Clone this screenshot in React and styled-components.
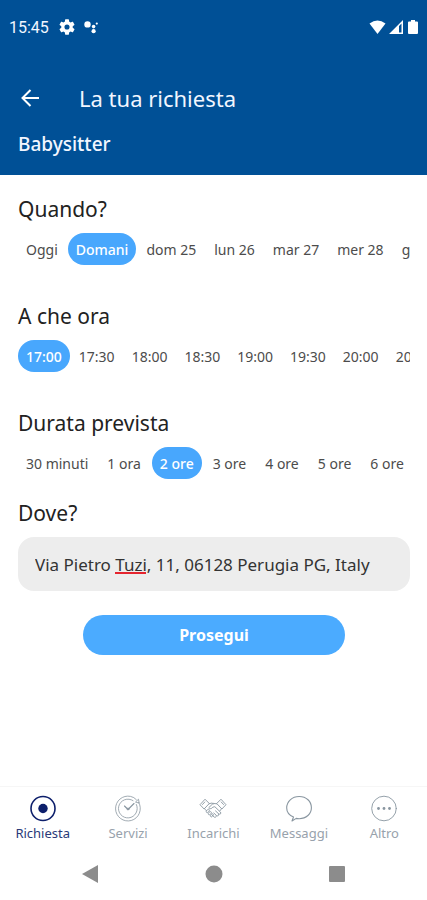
import React, { useLayoutEffect, useState } from "react";
import styled, { createGlobalStyle } from "styled-components";

const font = '"Noto Sans", "Open Sans", sans-serif';

const GlobalStyle = createGlobalStyle`
  * {
    box-sizing: border-box;
  }
  body {
    margin: 0;
    background: #fff;
    font-family: ${font};
  }
  button,
  input {
    font-family: inherit;
  }
`;

const Page = styled.div`
  display: flex;
  flex-direction: column;
  min-height: 100vh;
  background: #fff;
`;

const Header = styled.header`
  background: #005096;
  color: #f2f6ff;
  padding-bottom: 17px;
`;

const StatusBar = styled.div`
  display: flex;
  align-items: center;
  height: 54px;
  padding: 0 7px 0 9px;
  font-family: Roboto, sans-serif;
  font-size: 16px;
`;

const StatusIcons = styled.div`
  display: flex;
  align-items: center;
  gap: 8px;
  margin-left: 10px;
`;

const SignalIcons = styled(StatusIcons)`
  gap: 2px;
  margin-left: auto;
`;

const TitleRow = styled.div`
  display: flex;
  align-items: center;
  gap: 36px;
  height: 76px;
  padding: 12px 18px 0;
`;

const BackButton = styled.button`
  display: flex;
  padding: 0;
  border: 0;
  background: none;
  color: inherit;
  cursor: pointer;
`;

const Title = styled.h1`
  margin: 0;
  font-size: 22px;
  line-height: 30px;
  font-weight: 400;
`;

const Subtitle = styled.p`
  margin: 0;
  padding: 0 18px;
  font-size: 19px;
  line-height: 28px;
  font-weight: 500;
`;

const Main = styled.main`
  flex: 1;
  padding: 18px 17px 0 18px;
`;

const Section = styled.section`
  margin-bottom: ${(p) => (p.$tight ? 18 : 35)}px;
`;

const Heading = styled.h2`
  margin: 0 0 8px;
  color: #222;
  font-size: 21px;
  line-height: 32px;
  font-weight: 400;
`;

const Options = styled.div`
  display: flex;
  gap: ${(p) => p.$gap}px;
  overflow: hidden;
`;

const Option = styled.button`
  flex: none;
  height: 32px;
  padding: 0 8px;
  border: 0;
  border-radius: 16px;
  background: ${(p) => (p.$selected ? "#48a7fd" : "transparent")};
  color: ${(p) => (p.$selected ? "#fff" : "#4c4c4c")};
  font-size: 14px;
  font-weight: ${(p) => (p.$selected ? 500 : 400)};
  white-space: nowrap;
  cursor: pointer;
`;

const AddressLabel = styled.label`
  display: block;
  margin-bottom: 8px;
  color: #222;
  font-size: 21px;
  line-height: 32px;
`;

const AddressField = styled.div`
  position: relative;
`;

const AddressInput = styled.input`
  display: block;
  width: 100%;
  height: 54px;
  padding: 0 17px;
  border: 0;
  border-radius: 16px;
  background: #ededed;
  color: #333;
  font-size: 17px;
`;

const SpellingMark = styled.span`
  position: absolute;
  top: 35px;
  height: 2px;
  background: #e5252f;
  pointer-events: none;
`;

const SubmitButton = styled.button`
  display: block;
  width: 67%;
  height: 40px;
  margin: 24px auto;
  border: 0;
  border-radius: 20px;
  background: #4babff;
  color: #fff;
  font-size: 16px;
  font-weight: 700;
  cursor: pointer;
`;

const TabBar = styled.nav`
  display: grid;
  grid-template-columns: repeat(5, 1fr);
  padding-top: 8px;
  border-top: 1px solid #f6f6f6;
`;

const Tab = styled.a`
  display: flex;
  flex-direction: column;
  align-items: center;
  gap: 1px;
  color: ${(p) => (p.$active ? "#2a3a78" : "#98a2ac")};
  font-size: 13px;
  line-height: 18px;
  text-decoration: none;

  svg {
    color: ${(p) => (p.$active ? "#0d1f6b" : "#8996a0")};
  }
`;

const SystemBar = styled.div`
  display: flex;
  align-items: center;
  justify-content: space-between;
  height: 58px;
  padding: 6px 81px 0;
`;

const SystemButton = styled.button`
  display: flex;
  padding: 0;
  border: 0;
  background: none;
  cursor: pointer;
`;

const GearIcon = () => (
  <svg width="16" height="16" viewBox="2 2 20 20" fill="#fff" aria-hidden="true">
    <path d="M19.14 12.94a7 7 0 0 0 0-1.88l2.03-1.58a.5.5 0 0 0 .12-.61l-1.92-3.32a.5.5 0 0 0-.59-.22l-2.39.96a7 7 0 0 0-1.62-.94l-.36-2.54a.5.5 0 0 0-.48-.41h-3.84a.5.5 0 0 0-.47.41l-.36 2.54a7 7 0 0 0-1.62.94l-2.39-.96a.5.5 0 0 0-.59.22L2.74 8.87a.5.5 0 0 0 .12.61l2.03 1.58a7 7 0 0 0 0 1.88l-2.03 1.58a.5.5 0 0 0-.12.61l1.92 3.32c.12.22.37.29.59.22l2.39-.96c.5.38 1.03.7 1.62.94l.36 2.54c.05.24.24.41.48.41h3.84c.24 0 .44-.17.47-.41l.36-2.54a7 7 0 0 0 1.62-.94l2.39.96c.22.08.47 0 .59-.22l1.92-3.32a.5.5 0 0 0-.12-.61zM12 15.2a3.2 3.2 0 1 1 0-6.4 3.2 3.2 0 0 1 0 6.4z" />
  </svg>
);

const AssistantIcon = () => (
  <svg width="16" height="16" viewBox="0 0 16 16" fill="#fff" aria-hidden="true">
    <circle cx="4.5" cy="5.4" r="3.2" />
    <circle cx="10.6" cy="7.6" r="1.8" />
    <circle cx="10.6" cy="12.2" r="2.1" />
    <circle cx="13.8" cy="4.6" r="1.1" />
  </svg>
);

const WifiIcon = () => (
  <svg width="17" height="16" viewBox="0 0 17 16" fill="#fff" aria-hidden="true">
    <path d="M.5 4.6Q8.5-1.6 16.5 4.6L8.5 15z" />
  </svg>
);

const CellIcon = () => (
  <svg width="16" height="16" viewBox="0 0 16 16" fill="#fff" aria-hidden="true">
    <path fillRule="evenodd" d="M1 15L15 1v14zM11 7v6.5h2.500V4.500z" />
  </svg>
);

const BatteryIcon = () => (
  <svg width="14" height="16" viewBox="0 0 14 16" fill="#fff" aria-hidden="true">
    <path d="M5 1h4v1.500h2q1 0 1 1V14q0 1-1 1H3q-1 0-1-1V3.500q0-1 1-1h2z" />
  </svg>
);

const BackArrow = () => (
  <svg width="25" height="24" viewBox="0 0 25 24" fill="none" stroke="#fff" strokeWidth="2" aria-hidden="true">
    <path d="M21 12H5M12.5 4L4.500 12l8 8" />
  </svg>
);

const TabSvg = ({ children }) => (
  <svg width="28" height="28" viewBox="0 0 28 28" fill="none" stroke="currentColor" strokeLinecap="round" strokeLinejoin="round" aria-hidden="true">
    {children}
  </svg>
);

const RequestIcon = () => (
  <TabSvg>
    <circle cx="14" cy="13.5" r="12" strokeWidth="1.6" />
    <circle cx="14" cy="13.5" r="4.7" fill="currentColor" stroke="none" />
  </TabSvg>
);

const ServicesIcon = () => (
  <TabSvg>
    <g strokeWidth="0.8">
      <path d="M24.800 7.500A12.400 12.400 0 1 1 16.500 1.400Q20 2 22.400 4.700" />
      <path d="M22.400 9.500A9.400 9.400 0 1 1 19 5.600M21.800 6.800l2.700-2.600.6 3.500z" />
      <path d="M10.500 11l3.500 3.500L20 8.500" strokeWidth="1.1" />
      <circle cx="14" cy="14" r="1" />
    </g>
  </TabSvg>
);

const JobsIcon = () => (
  <TabSvg>
    <g strokeWidth="0.9">
      <path d="M6.300 4.500l4 4-5.200 5.500L1.300 10zM21.700 4.500l-4 4 5.200 5.500 3.800-4z" />
      <path d="M5.800 7L3.500 9.500M22.200 7l2.300 2.500" />
      <path d="M10 8.800l3-.8 1.500.9M17.700 8.800l-3.500-.4-4.400 4.200c1 1.600 2.800 1.300 4-.4l2-.5 5.600 5.300c1.200 1.400-.3 2.800-1.600 1.900l-3.300-3" />
      <path d="M19.500 19c.8 1.500-.8 2.600-2 1.500l-2.700-2.500M17.200 20.900c.2 1.400-1.100 2-2.200 1l-2-1.900M5.500 13.800l2 2M22.500 13.800L20.800 16" />
      <path d="M8.500 14.600c1.100-1.200 2.600.2 1.600 1.500l-1 1.200c-1.100 1.100-2.600-.2-1.700-1.400zM10.500 16.900c1.100-1.100 2.500.2 1.600 1.400l-1 1.200c-1.100 1-2.500-.2-1.600-1.400zM12.600 19c1.100-1 2.300.2 1.500 1.400l-1 1.200c-1 .9-2.200-.2-1.500-1.400z" />
    </g>
  </TabSvg>
);

const MessagesIcon = () => (
  <TabSvg>
    <path d="M8.500 22C4 20 1.700 16.800 1.700 12.900 1.700 6.500 7 1.500 14.200 1.500s12.200 5 12.200 11.200-5.200 11-12.200 11c-1 0-2-.1-3-.3L7 26z" strokeWidth="1.1" />
  </TabSvg>
);

const MoreIcon = () => (
  <TabSvg>
    <circle cx="14" cy="13.5" r="12.300" strokeWidth="0.9" />
    <g fill="currentColor" stroke="none">
      <circle cx="8.500" cy="13.500" r="1.400" />
      <circle cx="14" cy="13.500" r="1.400" />
      <circle cx="19.500" cy="13.500" r="1.400" />
    </g>
  </TabSvg>
);

const days = ["Oggi", "Domani", "dom 25", "lun 26", "mar 27", "mer 28", "gio 29"];
const times = ["17:00", "17:30", "18:00", "18:30", "19:00", "19:30", "20:00", "20:30"];
const durations = ["30 minuti", "1 ora", "2 ore", "3 ore", "4 ore", "5 ore", "6 ore"];

const tabs = [
  { label: "Richiesta", Icon: RequestIcon },
  { label: "Servizi", Icon: ServicesIcon },
  { label: "Incarichi", Icon: JobsIcon },
  { label: "Messaggi", Icon: MessagesIcon },
  { label: "Altro", Icon: MoreIcon },
];

const Picker = ({ title, items, initial, gap, tight }) => {
  const [selected, setSelected] = useState(initial);
  return (
    <Section $tight={tight}>
      <Heading>{title}</Heading>
      <Options $gap={gap}>
        {items.map((item) => (
          <Option
            key={item}
            type="button"
            $selected={item === selected}
            aria-pressed={item === selected}
            onClick={() => setSelected(item)}
          >
            {item}
          </Option>
        ))}
      </Options>
    </Section>
  );
};

const useWordMark = (text, word) => {
  const [mark, setMark] = useState(null);
  useLayoutEffect(() => {
    const start = text.indexOf(word);
    if (start < 0) {
      setMark(null);
      return;
    }
    const ctx = document.createElement("canvas").getContext("2d");
    ctx.font = `17px ${font}`;
    setMark({
      left: 17 + Math.round(ctx.measureText(text.slice(0, start)).width),
      width: Math.round(ctx.measureText(word).width),
    });
  }, [text, word]);
  return mark;
};

const Address = () => {
  const [address, setAddress] = useState("Via Pietro Tuzi, 11, 06128 Perugia PG, Italy");
  const mark = useWordMark(address, "Tuzi");
  return (
    <div>
      <AddressLabel htmlFor="address">Dove?</AddressLabel>
      <AddressField>
        <AddressInput
          id="address"
          type="text"
          spellCheck={false}
          value={address}
          onChange={(e) => setAddress(e.target.value)}
        />
        {mark && <SpellingMark style={mark} />}
      </AddressField>
    </div>
  );
};

const App = () => (
  <Page>
    <GlobalStyle />
    <Header>
      <StatusBar>
        <span>15:45</span>
        <StatusIcons>
          <GearIcon />
          <AssistantIcon />
        </StatusIcons>
        <SignalIcons>
          <WifiIcon />
          <CellIcon />
          <BatteryIcon />
        </SignalIcons>
      </StatusBar>
      <TitleRow>
        <BackButton type="button" aria-label="Indietro">
          <BackArrow />
        </BackButton>
        <Title>La tua richiesta</Title>
      </TitleRow>
      <Subtitle>Babysitter</Subtitle>
    </Header>
    <Main>
      <Picker title="Quando?" items={days} initial="Domani" gap={2} />
      <Picker title="A che ora" items={times} initial="17:00" gap={1} />
      <Picker title="Durata prevista" items={durations} initial="2 ore" gap={3} tight />
      <Address />
      <SubmitButton type="button">Prosegui</SubmitButton>
    </Main>
    <TabBar>
      {tabs.map(({ label, Icon }, i) => (
        <Tab key={label} href="#" $active={i === 0}>
          <Icon />
          {label}
        </Tab>
      ))}
    </TabBar>
    <SystemBar>
      <SystemButton type="button" aria-label="Indietro">
        <svg width="18" height="20" viewBox="0 0 18 20" fill="#8c8c8c">
          <path d="M17 1v18L1 10z" />
        </svg>
      </SystemButton>
      <SystemButton type="button" aria-label="Home">
        <svg width="18" height="18" viewBox="0 0 18 18" fill="#8c8c8c">
          <circle cx="9" cy="9" r="8.500" />
        </svg>
      </SystemButton>
      <SystemButton type="button" aria-label="Recenti">
        <svg width="18" height="18" viewBox="0 0 18 18" fill="#8c8c8c">
          <rect x="1" y="1" width="16" height="16" rx="1" />
        </svg>
      </SystemButton>
    </SystemBar>
  </Page>
);

export default App;
